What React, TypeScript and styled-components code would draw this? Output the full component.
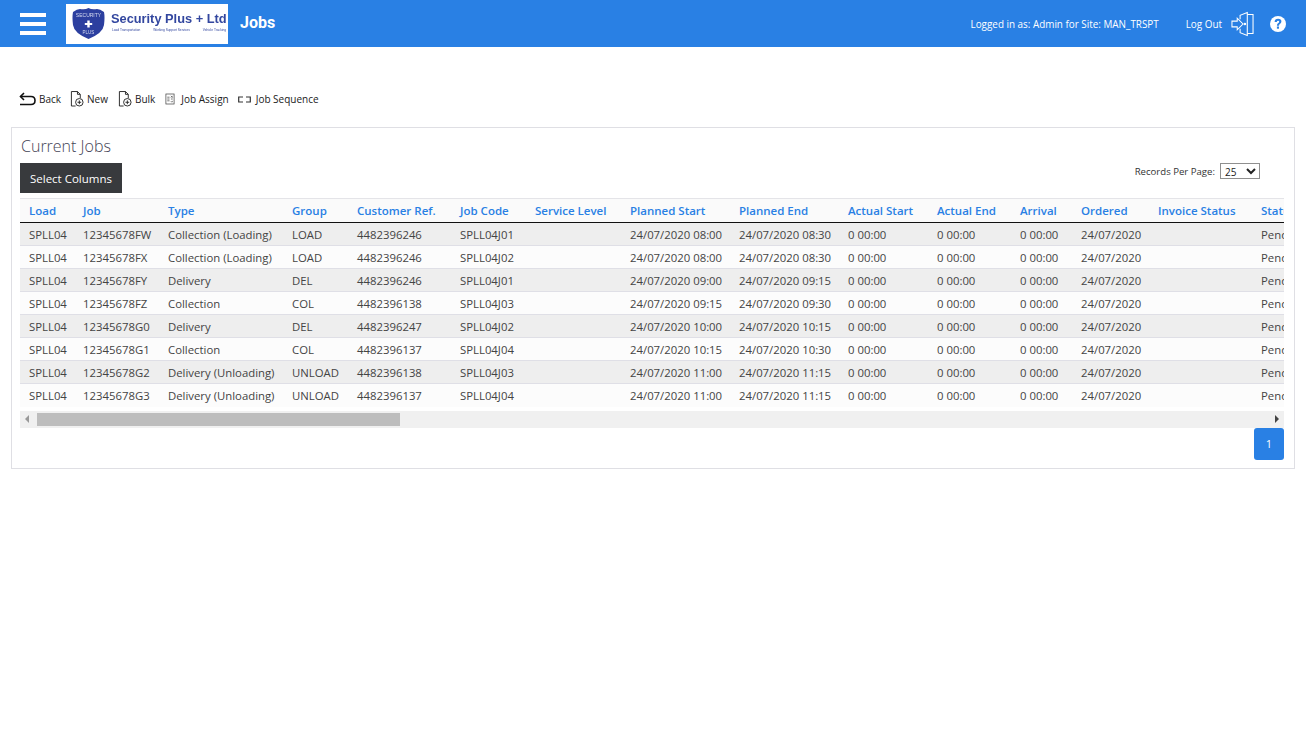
import React from "react";
import styled, { createGlobalStyle } from "styled-components";

const GlobalStyle = createGlobalStyle`
  html, body {
    margin: 0;
    padding: 0;
    background: #fff;
    font-family: "Open Sans", "Noto Sans", sans-serif;
    color: #333;
  }
`;

type Job = {
  job: string;
  type: string;
  group: string;
  ref: string;
  code: string;
  start: string;
  end: string;
};

const columns = [
  { title: "Load", width: 54 },
  { title: "Job", width: 85 },
  { title: "Type", width: 124 },
  { title: "Group", width: 65 },
  { title: "Customer Ref.", width: 103 },
  { title: "Job Code", width: 75 },
  { title: "Service Level", width: 95 },
  { title: "Planned Start", width: 109 },
  { title: "Planned End", width: 109 },
  { title: "Actual Start", width: 89 },
  { title: "Actual End", width: 83 },
  { title: "Arrival", width: 61 },
  { title: "Ordered", width: 77 },
  { title: "Invoice Status", width: 103 },
  { title: "Status", width: 80 },
];

const jobs: Job[] = [
  { job: "12345678FW", type: "Collection (Loading)", group: "LOAD", ref: "4482396246", code: "SPLL04J01", start: "08:00", end: "08:30" },
  { job: "12345678FX", type: "Collection (Loading)", group: "LOAD", ref: "4482396246", code: "SPLL04J02", start: "08:00", end: "08:30" },
  { job: "12345678FY", type: "Delivery", group: "DEL", ref: "4482396246", code: "SPLL04J01", start: "09:00", end: "09:15" },
  { job: "12345678FZ", type: "Collection", group: "COL", ref: "4482396138", code: "SPLL04J03", start: "09:15", end: "09:30" },
  { job: "12345678G0", type: "Delivery", group: "DEL", ref: "4482396247", code: "SPLL04J02", start: "10:00", end: "10:15" },
  { job: "12345678G1", type: "Collection", group: "COL", ref: "4482396137", code: "SPLL04J04", start: "10:15", end: "10:30" },
  { job: "12345678G2", type: "Delivery (Unloading)", group: "UNLOAD", ref: "4482396138", code: "SPLL04J03", start: "11:00", end: "11:15" },
  { job: "12345678G3", type: "Delivery (Unloading)", group: "UNLOAD", ref: "4482396137", code: "SPLL04J04", start: "11:00", end: "11:15" },
];

const Header = styled.header`
  height: 47px;
  background: #2980e4;
  display: flex;
  align-items: center;
  padding: 0 20px;
  color: #fff;
`;

const Burger = styled.div`
  width: 26px;
  display: flex;
  flex-direction: column;
  gap: 5px;
  margin-right: 20px;
  span {
    display: block;
    height: 4px;
    background: #fff;
  }
`;

const Logo = styled.div`
  width: 162px;
  height: 40px;
  background: #fff;
  display: flex;
  align-items: center;
  padding-left: 4px;
  box-sizing: border-box;
  margin-right: 12px;
  flex: none;
`;

const LogoShield = styled.svg`
  flex: none;
  filter: blur(0.4px);
`;

const LogoText = styled.div`
  margin-left: 4px;
  margin-top: -4px;
  width: 116px;
  font-family: "Liberation Sans", Arial, sans-serif;
  color: #33479f;
  filter: blur(0.4px);
`;

const LogoName = styled.div`
  font-size: 12.8px;
  line-height: 15px;
  font-weight: 700;
  white-space: nowrap;
`;

const LogoSub = styled.div`
  display: flex;
  justify-content: space-between;
  font-size: 3.2px;
  line-height: 5px;
  padding: 2px 1px 0;
  white-space: nowrap;
`;

const PageTitle = styled.h1`
  margin: 0 0 2px;
  font-family: "Roboto", sans-serif;
  font-size: 16px;
  font-weight: 700;
  flex: 1;
`;

const HeaderText = styled.span`
  font-size: 9.9px;
  white-space: nowrap;
`;

const LoggedIn = styled(HeaderText)`
  margin-right: 27px;
`;

const LogOut = styled(HeaderText)`
  margin-right: 9px;
`;

const HeaderIcon = styled.svg`
  display: block;
  flex: none;
`;

const HelpSlot = styled.div`
  margin-left: 16px;
`;

const Toolbar = styled.nav`
  display: flex;
  align-items: center;
  height: 22px;
  margin: 41px 0 17px;
  padding-left: 19px;
`;

const ToolButton = styled.a<{ $gap: number; $iconGap: number }>`
  display: flex;
  align-items: center;
  gap: ${(p) => p.$iconGap}px;
  margin-right: ${(p) => p.$gap}px;
  font-size: 10px;
  color: #222;
  white-space: nowrap;
`;

const Panel = styled.section`
  margin: 0 11px;
  height: 342px;
  box-sizing: border-box;
  border: 1px solid #dfdfe4;
  padding: 8px 10px 0 8px;
`;

const PanelTitle = styled.h2`
  margin: 0 0 0 1px;
  height: 27px;
  font-size: 16px;
  line-height: 21px;
  font-weight: 300;
  color: #445;
`;

const ControlRow = styled.div`
  display: flex;
  justify-content: space-between;
  align-items: flex-start;
  height: 35px;
`;

const SelectColumns = styled.button`
  width: 102px;
  height: 30px;
  border: 0;
  padding: 0;
  background: #383a3d;
  color: #fff;
  font-family: inherit;
  font-size: 11.5px;
`;

const PerPage = styled.label`
  display: flex;
  align-items: center;
  gap: 5px;
  font-size: 9.6px;
  color: #333;
  margin: 0 24px 0 0;
`;

const PerPageSelect = styled.select`
  width: 40px;
  height: 16px;
  padding: 0;
  font-family: inherit;
  font-size: 10px;
  background: #fff;
  border: 1px solid #8f8f8f;
  border-radius: 0;
  color: #222;
`;

const TableClip = styled.div`
  overflow: hidden;
`;

const Table = styled.table`
  width: 1312px;
  table-layout: fixed;
  border-collapse: collapse;
  white-space: nowrap;
`;

const HeadCell = styled.th`
  height: 24px;
  box-sizing: border-box;
  padding: 0 0 0 9px;
  background: #fafafa;
  border-top: 1px solid #e4e4e8;
  border-bottom: 1.5px solid #111;
  text-align: left;
  font-size: 11.5px;
  font-weight: 600;
  color: #2980e4;
  overflow: hidden;
`;

const Row = styled.tr<{ $odd: boolean }>`
  background: ${(p) => (p.$odd ? "#eeeeee" : "#fcfcfc")};
  &:last-child td {
    border-bottom: 0;
  }
`;

const Cell = styled.td`
  height: 23px;
  box-sizing: border-box;
  padding: 0 0 0 9px;
  border-bottom: 1px solid #dfdfe6;
  font-size: 11.35px;
  color: #444;
  overflow: hidden;
`;

const ScrollBar = styled.div`
  height: 17px;
  margin-top: 4px;
  background: #f0f0f0;
  display: flex;
  align-items: center;
  justify-content: space-between;
  padding-right: 5px;
  position: relative;
`;

const ScrollArrow = styled.i<{ $right?: boolean }>`
  display: block;
  width: 0;
  height: 0;
  margin-left: ${(p) => (p.$right ? 0 : 5)}px;
  border-top: 4px solid transparent;
  border-bottom: 4px solid transparent;
  ${(p) => (p.$right ? "border-left: 4px solid #444;" : "border-right: 4px solid #999;")}
`;

const ScrollThumb = styled.div`
  position: absolute;
  left: 17px;
  top: 2px;
  width: 363px;
  height: 13px;
  background: #bdbdbd;
`;

const Pager = styled.div`
  display: flex;
  justify-content: flex-end;
`;

const PageButton = styled.button`
  width: 30px;
  height: 32px;
  border: 0;
  padding: 0;
  border-radius: 3px;
  background: #2980e4;
  color: #fff;
  font-family: inherit;
  font-size: 11px;
`;

const Shield = () => (
  <LogoShield width="37" height="33" viewBox="0 0 37 33">
    <path d="M3 5 Q7 2 10 2 Q15 3 18.500 1 Q22 3 27 2 Q30 2 34 5 Q35 10 34 18 Q33 26 18.500 32 Q4 26 3 18 Q2 10 3 5 Z" fill="#2c3f9f" />
    <path d="M17.300 13.500h2.400v2.500h2.500v2h-2.500v2.500h-2.400v-2.500h-2.500v-2h2.500z" fill="#fff" />
    <text x="18.500" y="9.500" textAnchor="middle" fontSize="5" fontFamily="Liberation Sans" fill="#d5daf0">SECURITY</text>
    <text x="18.500" y="27" textAnchor="middle" fontSize="4.500" fontFamily="Liberation Sans" fill="#d5daf0">PLUS</text>
  </LogoShield>
);

const BackIcon = () => (
  <svg width="17" height="14" viewBox="0 0 17 14" fill="none" stroke="#111" strokeWidth="1.600">
    <path d="M5 1 L1.500 4.500 L5 8" />
    <path d="M1.500 4.500 H12 Q16 4.500 16 8.500 Q16 12.500 12 12.500 H1" />
  </svg>
);

const FileAddIcon = () => (
  <svg width="14" height="18" viewBox="0 0 15 18" fill="none" stroke="#222" strokeWidth="1">
    <path d="M6 16.500 H1.500 V1 H8 L11 4 V8" />
    <path d="M8 1 V4 H11" />
    <circle cx="10" cy="12.500" r="4" />
    <path d="M10 10.500 V14.500 M8 12.500 H12" />
  </svg>
);

const AssignIcon = () => (
  <svg width="10" height="12" viewBox="0 0 11 13" fill="none" stroke="#444" strokeWidth="0.800">
    <rect x="1" y="1" width="9" height="11" />
    <path d="M2.500 4.500 H5 M2.500 6.500 H5 M2.500 8.500 H5 M6.500 3 L8.500 5 M8.500 3 L6.500 5 M6.500 6.500 H8.500 M6.500 9 L7.500 10 L8.500 8.500" />
  </svg>
);

const SequenceIcon = () => (
  <svg width="13" height="7" viewBox="0 0 13 7" fill="none" stroke="#333" strokeWidth="1.200">
    <path d="M5 1 H0.700 V6 H5" />
    <path d="M8 1 H12.300 V6 H8" />
  </svg>
);

const DoorIcon = () => (
  <HeaderIcon width="23" height="26" viewBox="0 0 24 26" fill="none" stroke="#fff" strokeWidth="1.100">
    <path d="M1 10 H6.500 V7 L12.500 13 L6.500 19 V16 H1 Z" />
    <path d="M9.500 8 V4 L17 1 V25 L9.500 22 V18" />
    <path d="M17 3 H23 V23 H17" />
    <circle cx="14.500" cy="13" r="0.800" fill="#fff" />
  </HeaderIcon>
);

const HelpIcon = () => (
  <HeaderIcon width="16" height="16" viewBox="0 0 16 16">
    <circle cx="8" cy="8" r="8" fill="#fff" />
    <path d="M4.600 6 Q4.700 2.800 8.100 2.800 Q11.400 2.800 11.400 5.600 Q11.400 7.200 9.800 8 Q9 8.500 9 9.700 H6.900 Q6.900 7.700 8.300 7 Q9.200 6.500 9.200 5.700 Q9.200 4.700 8.100 4.700 Q6.900 4.700 6.800 6 Z" fill="#2980e4" />
    <rect x="6.900" y="10.500" width="2.100" height="2.200" fill="#2980e4" />
  </HeaderIcon>
);

const App = () => {
  return (
    <>
      <GlobalStyle />
      <Header>
        <Burger>
          <span />
          <span />
          <span />
        </Burger>
        <Logo>
          <Shield />
          <LogoText>
            <LogoName>Security Plus + Ltd</LogoName>
            <LogoSub>
              <span>Load Transportation</span>
              <span>Working Support Services</span>
              <span>Vehicle Tracking</span>
            </LogoSub>
          </LogoText>
        </Logo>
        <PageTitle>Jobs</PageTitle>
        <LoggedIn>Logged in as: Admin for Site: MAN_TRSPT</LoggedIn>
        <LogOut>Log Out</LogOut>
        <DoorIcon />
        <HelpSlot>
          <HelpIcon />
        </HelpSlot>
      </Header>

      <Toolbar>
        <ToolButton $iconGap={3} $gap={9}>
          <BackIcon />
          Back
        </ToolButton>
        <ToolButton $iconGap={3} $gap={10}>
          <FileAddIcon />
          New
        </ToolButton>
        <ToolButton $iconGap={3} $gap={10}>
          <FileAddIcon />
          Bulk
        </ToolButton>
        <ToolButton $iconGap={6} $gap={9}>
          <AssignIcon />
          Job Assign
        </ToolButton>
        <ToolButton $iconGap={5} $gap={0}>
          <SequenceIcon />
          Job Sequence
        </ToolButton>
      </Toolbar>

      <Panel>
        <PanelTitle>Current Jobs</PanelTitle>
        <ControlRow>
          <SelectColumns>Select Columns</SelectColumns>
          <PerPage>
            Records Per Page:
            <PerPageSelect defaultValue="25">
              <option>25</option>
              <option>50</option>
              <option>100</option>
            </PerPageSelect>
          </PerPage>
        </ControlRow>
        <TableClip>
          <Table>
            <colgroup>
              {columns.map((c) => (
                <col key={c.title} width={c.width} />
              ))}
            </colgroup>
            <thead>
              <tr>
                {columns.map((c) => (
                  <HeadCell key={c.title}>{c.title}</HeadCell>
                ))}
              </tr>
            </thead>
            <tbody>
              {jobs.map((j, i) => (
                <Row key={j.job} $odd={i % 2 === 0}>
                  <Cell>SPLL04</Cell>
                  <Cell>{j.job}</Cell>
                  <Cell>{j.type}</Cell>
                  <Cell>{j.group}</Cell>
                  <Cell>{j.ref}</Cell>
                  <Cell>{j.code}</Cell>
                  <Cell />
                  <Cell>24/07/2020 {j.start}</Cell>
                  <Cell>24/07/2020 {j.end}</Cell>
                  <Cell>0 00:00</Cell>
                  <Cell>0 00:00</Cell>
                  <Cell>0 00:00</Cell>
                  <Cell>24/07/2020</Cell>
                  <Cell />
                  <Cell>Pending</Cell>
                </Row>
              ))}
            </tbody>
          </Table>
        </TableClip>
        <ScrollBar>
          <ScrollArrow />
          <ScrollThumb />
          <ScrollArrow $right />
        </ScrollBar>
        <Pager>
          <PageButton>1</PageButton>
        </Pager>
      </Panel>
    </>
  );
};

export default App;
